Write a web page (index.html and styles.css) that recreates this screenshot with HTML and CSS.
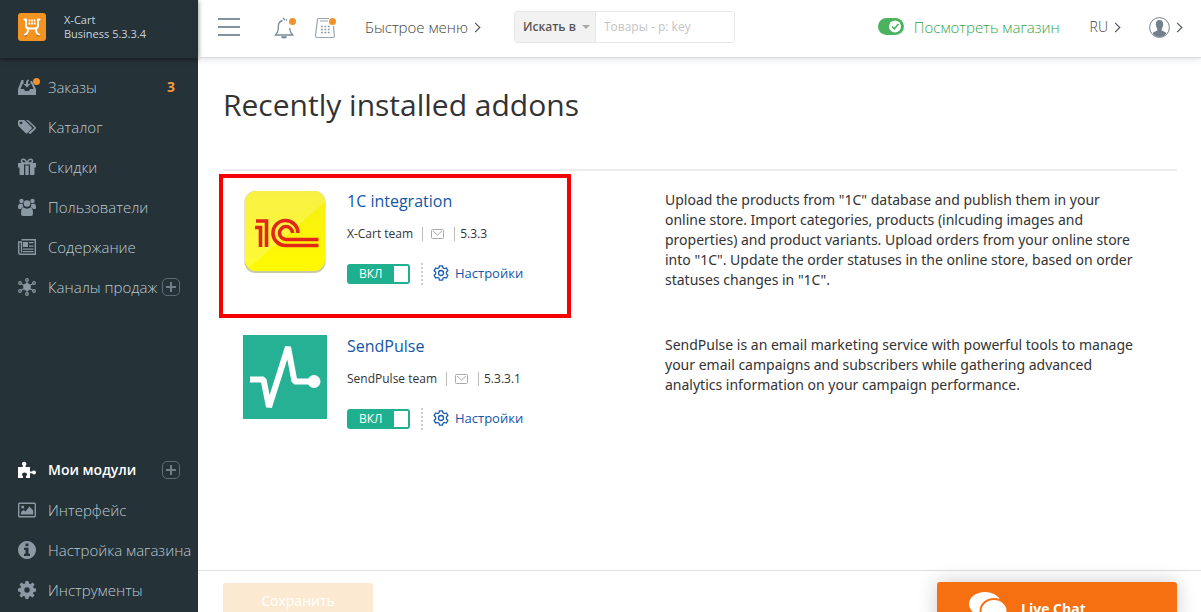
FILE: index.html
```html
<!DOCTYPE html>
<html lang="ru">
<head>
<meta charset="utf-8">
<title>Recently installed addons</title>
<link rel="stylesheet" href="styles.css">
</head>
<body>
<div class="app">
  <aside class="sidebar">
    <div class="brand">
      <svg class="brand-logo" viewBox="0 0 28 28" aria-hidden="true">
        <rect width="28" height="28" rx="3" fill="#f39322"/>
        <circle cx="7.500" cy="22" r="1.700" fill="#b36310"/><circle cx="20.500" cy="22" r="1.700" fill="#b36310"/>
        <g fill="none" stroke="#fff" stroke-width="2" stroke-linecap="round" stroke-linejoin="round">
          <path d="M6.500 6.500h1.500v6q0 3 3 3h6q3 0 3-3v-6h1.500"/>
          <path d="M7 21.500q3-.5 3-6M21 21.500q-3-.5-3-6"/>
        </g>
        <path d="M10.500 7.500h7M10.500 10.500h7" stroke="#fff" stroke-width="1.800" stroke-dasharray="1.800 .8"/>
      </svg>
      <div class="brand-text">X-Cart<br>Business 5.3.3.4</div>
    </div>
    <nav class="menu">
      <ul>
        <li><a href="#"><svg class="ico" viewBox="0 0 18 18"><path d="M3.500 2h2v4H4.500L2.500 11H6l1 2h4l1-2h3.500l-2-5h-1V3l1.500 0 4 8v6H0v-6z"/><path d="M11 1.500Q8 1.500 8 5v1H5.500L9 9.500 12.500 6H10V4.500q0-1.500 1-1.500z"/></svg><span>Заказы</span><b class="count">3</b><i class="dot"></i></a></li>
        <li><a href="#"><svg class="ico" viewBox="0 0 18 18"><path fill-rule="evenodd" d="M0 3.500Q0 2 1.500 2h4q1 0 2 1l6 6q1 1 0 2l-4 4q-1 1-2 0l-6.500-6.500Q0 7.500 0 6.500zM3 3.500a1.400 1.400 0 1 0 .1 0z"/><path d="M8 2h1.500q.8 0 1.500.8l6.500 6.200q1 1 0 2l-4.500 4.500q-.8.800-1.800 0l-.7-.7 5-4.300q.8-.8 0-1.600z"/></svg><span>Каталог</span></a></li>
        <li><a href="#"><svg class="ico" viewBox="0 0 18 18"><path d="M0 5h18v4.500h-1.500V16q0 1-1 1H12V6.500H6V17H2.500q-1 0-1-1V9.500H0zM7.300 7.500h3.400V17H7.300z"/><path d="M9 5Q7.500 1.200 5.300 1.200 3.500 1.200 3.500 3T5.500 5zM9 5q1.500-3.800 3.700-3.800 1.800 0 1.800 1.800t-2 2z" fill="none" stroke="currentColor" stroke-width="1.500"/></svg><span>Скидки</span></a></li>
        <li><a href="#"><svg class="ico" viewBox="0 0 18 18"><circle cx="3.500" cy="3" r="2.200"/><circle cx="14.500" cy="3" r="2.200"/><circle cx="9" cy="5.500" r="3.300"/><path d="M0 9.500Q0 5.800 2 5.800l2.800.2Q4.500 8 5.500 9.200 3.500 9.500 3 11H1q-1 0-1-1.500zM18 9.500q0-3.700-2-3.700l-2.800.2q.3 2-.7 3.200 2 .3 2.500 1.800h2q1 0 1-1.500zM5.300 9.600q3.700 2.200 7.400 0Q15 10 15 15.500q0 2.500-2 2.500H5q-2 0-2-2.500Q3 10 5.300 9.600z"/></svg><span>Пользователи</span></a></li>
        <li><a href="#"><svg class="ico" viewBox="0 0 18 18"><path d="M3.500 1.700h13.800v14.600H2.200Q.7 16.300.7 14.500V4h2.800v10.500" fill="none" stroke="currentColor" stroke-width="1.400"/><path d="M5 4h5v5H5zM11 4h4.500v1.300H11zM11 7.500h4.500v1.300H11zM5 10.500h10.500v1.300H5zM5 13h10.500v1.300H5z"/></svg><span>Содержание</span></a></li>
        <li><a href="#"><svg class="ico" viewBox="0 0 18 18"><circle cx="9" cy="9" r="3.800"/><g fill="none" stroke="currentColor" stroke-width="1.200"><circle cx="9" cy="2" r="1.300"/><circle cx="9" cy="16" r="1.300"/><circle cx="2" cy="5" r="1.300"/><circle cx="16" cy="5" r="1.300"/><circle cx="2" cy="13" r="1.300"/><circle cx="16" cy="13" r="1.300"/><path d="M9 3.500v11M3.200 5.700l11.600 6.600M14.800 5.700L3.200 12.300"/></g></svg><span>Каналы продаж</span><i class="plus"></i></a></li>
      </ul>
      <ul>
        <li class="active"><a href="#"><svg class="ico" viewBox="0 0 18 18"><path d="M0 6h4.800V4.500Q4 3.800 4 2.700 4 .7 6.200.7T8.400 2.700q0 1.100-.8 1.800V6H12v4.500h2q.6-1.100 2-1.100 2 0 2 2t-2 2q-1.400 0-2-1.100h-2V17H8v-2q1-.5 1-1.600Q9 11.500 6.500 11.500T4 13.400Q4 14.500 5 15v2H0z"/></svg><span>Мои модули</span><i class="plus"></i></a></li>
        <li><a href="#"><svg class="ico" viewBox="0 0 18 18"><rect x=".7" y="2.200" width="16.600" height="13.600" rx="1" fill="none" stroke="currentColor" stroke-width="1.400"/><circle cx="4.700" cy="6" r="1.500"/><path d="M3 13.500V11l2.500-2L7.500 10.500l4-5 3.700 4v4z"/></svg><span>Интерфейс</span></a></li>
        <li><a href="#"><svg class="ico" viewBox="0 0 18 18"><path fill-rule="evenodd" d="M9 0a9 9 0 1 0 .01 0zM7.500 2.500h3v2.700h-3zM6 6.700h4.500v6H12V15H6v-2.300h1.500V9H6z"/></svg><span>Настройка магазина</span></a></li>
        <li><a href="#"><svg class="ico" viewBox="0 0 18 18"><path fill-rule="evenodd" d="M7.500 0h3l.5 2.600 1.400.6L14.600 1.600l2 2-1.500 2.200.6 1.500L18 7.600v3l-2.400.4-.6 1.400 1.500 2.200-2 2-2.200-1.500-1.400.6-.4 2.300h-3l-.5-2.400-1.500-.6-2.100 1.500-2-2L2.900 12.400l-.6-1.400L0 10.500v-3l2.400-.4.6-1.400L1.500 3.500l2-2 2.200 1.500L7.100 2.400zM9 6.200a2.800 2.800 0 1 0 .01 0z"/></svg><span>Инструменты</span></a></li>
      </ul>
    </nav>
  </aside>

  <div class="main">
    <header class="topbar">
      <button class="burger" type="button" aria-label="Меню"><i></i><i></i><i></i></button>
      <div class="notices">
        <button class="icon-btn" type="button" aria-label="Уведомления">
          <svg width="22" height="22" viewBox="0 0 22 22" fill="none" stroke="#788a98" stroke-width="1.300"><path d="M8.500 3.500Q4.500 4.500 4.300 9.500q0 5-1.500 6.500L1.500 18h17.200l-1.500-2q-1.400-2-1.500-5"/><path d="M9 1l2 2M12 3h1" /><path d="M7.500 19.500q2.500 2 5 0" stroke-width="2"/></svg>
          <i class="dot"></i>
        </button>
        <button class="icon-btn" type="button" aria-label="Платежи">
          <svg width="22" height="22" viewBox="0 0 22 22" fill="none" stroke="#98a5af" stroke-width="1.200"><path d="M15 1.500H4.500q-1 0-1 1L1.500 18.500q0 2 1.500 2h16q1.500 0 1.300-2L19.500 9M6 4h8"/><path d="M7 9.500h9M7 12.500h9M7 15.500h9" stroke="#8796a2" stroke-width="1.600" stroke-dasharray="1.800 1.600"/></svg>
          <i class="dot"></i>
        </button>
      </div>
      <a class="quick chevron" href="#">Быстрое меню</a>
      <form class="search">
        <button type="button">Искать в<i class="caret"></i></button>
        <input type="text" aria-label="Поиск" placeholder="Товары - p: key">
      </form>
      <div class="account">
        <a class="store" href="#"><svg width="26" height="18" viewBox="0 0 26 18"><rect width="26" height="17" rx="8.500" fill="#4bb35e"/><circle cx="17" cy="8.500" r="6" fill="#fff"/><path d="M14 8.500l2.300 2.300L20.500 6" fill="none" stroke="#4bb35e" stroke-width="1.700"/></svg>Посмотреть магазин</a>
        <a class="lang chevron" href="#">RU</a>
        <a class="user chevron" href="#" aria-label="Профиль"><svg width="21" height="21" viewBox="0 0 21 21"><circle cx="10.500" cy="10.500" r="9.900" fill="#fff" stroke="#71808c"/><path d="M10.500 3Q14.300 3 14.200 7.500 14 10 12.700 12v1.500l3.800 1.700q.6.500.6 1.500-2.500 3.300-6.600 3.300T3.900 16.700q0-1 .6-1.500l3.800-1.700V12Q7 10 6.800 7.500 6.700 3 10.500 3z" fill="#71808c"/></svg></a>
      </div>
    </header>

    <main class="content">
      <h1>Recently installed addons</h1>
      <ul class="addons">
        <li class="addon marked">
          <svg class="logo" viewBox="0 0 84 84" role="img" aria-label="1C">
            <defs><linearGradient id="y" x1="0" y1="0" x2="0" y2="1"><stop offset="0" stop-color="#f7ee14"/><stop offset="1" stop-color="#fffa00"/></linearGradient></defs>
            <rect x="1.500" y="1" width="81" height="82" rx="11" fill="#c9c9a5"/>
            <rect x="2" y="1" width="80" height="80" rx="11" fill="url(#y)"/>
            <path d="M13 1h58q11 0 11 11L7 77Q2 74 2 70V12Q2 1 13 1z" fill="#fff" opacity=".2"/>
            <g fill="none" stroke="#e2261c" stroke-width="3.600">
              <path d="M12 37.500h5.500V57M13 31h10.500v26"/>
              <path d="M55 43A12.500 12.500 0 1 0 43 55.500H75.500"/>
              <path d="M49.500 43a6.500 6.500 0 1 0-6.500 6.500H75.500"/>
            </g>
          </svg>
          <div class="info">
            <h2><a href="#">1C integration</a></h2>
            <div class="meta"><span>X-Cart team</span><span class="mail"><svg width="13" height="10" viewBox="0 0 13 10" fill="none" stroke="#aaa"><rect x=".5" y=".5" width="12" height="9" rx="1"/><path d="M2 2l4.500 4L11 2"/></svg></span><span>5.3.3</span></div>
            <div class="actions"><label class="toggle"><input type="checkbox" checked><span>ВКЛ</span></label><a class="settings" href="#"><svg width="16" height="16" viewBox="0 0 16 16" fill="none" stroke="#1a5bb0" stroke-width="1.300"><path d="M6.500.8h3l.5 2 1.400.8 2-.6 1.500 2.600L13.400 7v2l1.500 1.400-1.500 2.600-2-.6-1.400.8-.5 2h-3l-.5-2-1.400-.8-2 .6-1.500-2.600L2.600 9V7L1.100 5.600 2.600 3l2 .6L6 2.800z"/><circle cx="8" cy="8" r="2.500"/></svg>Настройки</a></div>
          </div>
          <p>Upload the products from "1C" database and publish them in your online store. Import categories, products (inlcuding images and properties) and product variants. Upload orders from your online store into "1C". Update the order statuses in the online store, based on order statuses changes in "1C".</p>
        </li>
        <li class="addon">
          <svg class="logo" viewBox="0 0 84 84" role="img" aria-label="SendPulse">
            <rect width="84" height="84" fill="#26b094"/>
            <path d="M7 44.500h13.500L26 72L45 12l6.500 34.500H70" fill="none" stroke="#fff" stroke-width="6" stroke-linejoin="bevel"/>
            <circle cx="71" cy="46.500" r="6.500" fill="#fff"/>
          </svg>
          <div class="info">
            <h2><a href="#">SendPulse</a></h2>
            <div class="meta"><span>SendPulse team</span><span class="mail"><svg width="13" height="10" viewBox="0 0 13 10" fill="none" stroke="#aaa"><rect x=".5" y=".5" width="12" height="9" rx="1"/><path d="M2 2l4.500 4L11 2"/></svg></span><span>5.3.3.1</span></div>
            <div class="actions"><label class="toggle"><input type="checkbox" checked><span>ВКЛ</span></label><a class="settings" href="#"><svg width="16" height="16" viewBox="0 0 16 16" fill="none" stroke="#1a5bb0" stroke-width="1.300"><path d="M6.500.8h3l.5 2 1.400.8 2-.6 1.500 2.600L13.400 7v2l1.500 1.400-1.500 2.600-2-.6-1.400.8-.5 2h-3l-.5-2-1.400-.8-2 .6-1.500-2.600L2.600 9V7L1.100 5.600 2.600 3l2 .6L6 2.800z"/><circle cx="8" cy="8" r="2.500"/></svg>Настройки</a></div>
          </div>
          <p>SendPulse is an email marketing service with powerful tools to manage your email campaigns and subscribers while gathering advanced analytics information on your campaign performance.</p>
        </li>
      </ul>
    </main>

    <footer class="savebar"><button class="save" type="button" disabled>Сохранить</button></footer>
  </div>
  <button class="chat" type="button"><svg width="38" height="34" viewBox="0 0 38 34"><ellipse cx="16" cy="12" rx="16" ry="12" fill="#fff"/><path d="M4 18l-2 9 9-4z" fill="#fff"/><ellipse cx="25" cy="19" rx="13.500" ry="12" fill="#fff" stroke="#f66f10" stroke-width="2"/></svg>Live Chat</button>
</div>
</body>
</html>
```
FILE: styles.css
```css
*, *::before, *::after { box-sizing: border-box; }

body {
  margin: 0;
  font: 14px/20px "Open Sans", "Noto Sans", sans-serif;
  color: #333;
  background: #fff;
}

a { color: #1356a8; text-decoration: none; }
ul { list-style: none; margin: 0; padding: 0; }
button, input { font: inherit; }
button { border: 0; padding: 0; background: none; }
svg { flex: none; display: block; }

.app {
  position: relative;
  display: flex;
  height: 100vh;
  overflow: hidden;
}

/* Sidebar */
.sidebar {
  flex: none;
  display: flex;
  flex-direction: column;
  width: 198px;
  background: #253238;
}

.brand {
  flex: none;
  display: flex;
  align-items: center;
  gap: 18px;
  height: 58px;
  padding: 0 18px 4px;
  box-shadow: 0 1px 5px rgba(0, 0, 0, .5);
}
.brand-logo { width: 28px; height: 28px; }
.brand-text { font-size: 11px; line-height: 14px; color: #c8d4da; }

.menu {
  flex: 1;
  display: flex;
  flex-direction: column;
  justify-content: space-between;
  padding: 9px 0 2px;
}
.menu a {
  position: relative;
  display: flex;
  align-items: center;
  height: 40px;
  padding: 0 18px;
  font-size: 15px;
  font-weight: 300;
  color: #bccad2;
  white-space: nowrap;
}
.menu .active a { color: #fff; font-size: 14px; font-weight: 600; }
.ico { width: 18px; height: 18px; margin-right: 12px; fill: currentColor; color: #8a99a3; }
.active .ico { color: #fff; }
.count { margin-left: auto; padding-right: 5px; font-size: 14px; font-weight: 700; color: #f19a3a; }

.dot {
  position: absolute;
  width: 7px;
  height: 7px;
  border-radius: 50%;
  background: #f0912a;
}
.menu .dot { left: 33px; top: 11px; }

.plus {
  width: 18px;
  height: 18px;
  margin-left: auto;
  border: 1px solid #5d6b73;
  border-radius: 5px;
  background:
    linear-gradient(#6f7e87, #6f7e87) center / 10px 2px no-repeat,
    linear-gradient(#6f7e87, #6f7e87) center / 2px 10px no-repeat;
}

/* Main column */
.main { flex: 1; min-width: 0; display: flex; flex-direction: column; }

.topbar {
  flex: none;
  display: flex;
  align-items: center;
  height: 58px;
  padding: 0 20px 3px;
  border-bottom: 1px solid #d9d9dc;
  box-shadow: 0 1px 7px rgba(40, 50, 80, .16);
}
.topbar a { color: #444; font-weight: 300; font-size: 15px; }

.burger { display: grid; gap: 6px; width: 22px; }
.burger i { height: 2px; background: #8291a0; }

.notices { display: flex; gap: 18px; margin-left: 34px; }
.icon-btn { position: relative; padding-top: 2px; }
.icon-btn .dot { right: 0; top: 3px; }

.chevron { display: flex; align-items: center; }
.chevron::after {
  content: "";
  width: 7px;
  height: 7px;
  margin-left: 4px;
  border: solid #444;
  border-width: 1px 1px 0 0;
  transform: rotate(45deg);
}
.quick { margin-left: 29px; }

.search {
  display: flex;
  width: 221px;
  height: 32px;
  margin-left: 35px;
  border: 1px solid #e6e6e6;
  border-radius: 3px;
  overflow: hidden;
}
.search button {
  flex: none;
  display: flex;
  align-items: center;
  gap: 6px;
  width: 81px;
  padding-left: 8px;
  font-size: 12px;
  font-weight: 600;
  color: #555;
  background: #f2f2f2;
  border-right: 1px solid #e6e6e6;
}
.caret { border: 4px solid transparent; border-top-color: #aaa; border-bottom: 0; }
.search input {
  flex: 1;
  min-width: 0;
  padding: 0 8px;
  border: 0;
  font-size: 12px;
  background: #fff;
}
.search input::placeholder { color: #c4c4c4; }

.account { display: flex; align-items: center; margin-left: auto; }
.topbar .store { display: flex; align-items: center; gap: 10px; color: #2fa546; }
.topbar .lang { margin-left: 30px; font-size: 14px; }
.user { margin-left: 30px; }

.content { flex: 1; min-height: 0; padding: 27px 24px 0 25px; }
h1 { margin: 0 0 44px; font-size: 30px; line-height: 40px; font-weight: 400; color: #333; }

.addons { border-top: 2px solid #ececee; padding-top: 19px; }
.addon {
  position: relative;
  display: grid;
  grid-template-columns: 84px 298px 1fr;
  column-gap: 20px;
  min-height: 145px;
  padding: 0 20px;
}
.marked::before {
  content: "";
  position: absolute;
  left: -4px;
  top: -16px;
  width: 352px;
  height: 144px;
  border: 4px solid #f40000;
  pointer-events: none;
}
.logo { width: 84px; height: 84px; }
.addon h2 { margin: 0; font-size: 16px; line-height: 22px; font-weight: 400; }
.addon p { margin: 0; padding-right: 18px; font-family: "Noto Sans", "Open Sans", sans-serif; }

.meta { display: flex; align-items: center; margin-top: 12px; font-size: 12px; }
.mail {
  margin: 0 5px 0 9px;
  padding: 2px 10px 2px 8px;
  border: solid #bbb;
  border-width: 0 1px;
}

.actions { display: flex; align-items: center; margin-top: 19px; }
.toggle {
  display: flex;
  flex-direction: row-reverse;
  align-items: center;
  justify-content: space-between;
  width: 63px;
  height: 20px;
  padding: 0 2px 0 12px;
  border-radius: 3px;
  font-size: 12px;
  color: #fff;
  background: #1eb08f;
}
.toggle input { appearance: none; width: 14px; height: 16px; margin: 0; background: #fff; }
.settings {
  display: flex;
  align-items: center;
  gap: 6px;
  margin-left: 11px;
  padding: 0 0 2px 10px;
  border-left: 2px dotted #ccc;
  font-size: 13px;
}

.savebar {
  flex: none;
  height: 42px;
  padding: 12px 25px;
  border-top: 1px solid #dedee0;
}
.save {
  width: 150px;
  height: 36px;
  border-radius: 3px;
  color: #fff;
  background: #fbe9d2;
}

.chat {
  position: absolute;
  right: 24px;
  bottom: -18px;
  display: flex;
  align-items: center;
  gap: 14px;
  width: 240px;
  height: 48px;
  padding: 6px 32px 0;
  border-radius: 3px 3px 0 0;
  font-weight: 700;
  color: #fff;
  background: #f66f10;
  box-shadow: 0 0 20px rgba(0, 0, 0, .2);
}
```
